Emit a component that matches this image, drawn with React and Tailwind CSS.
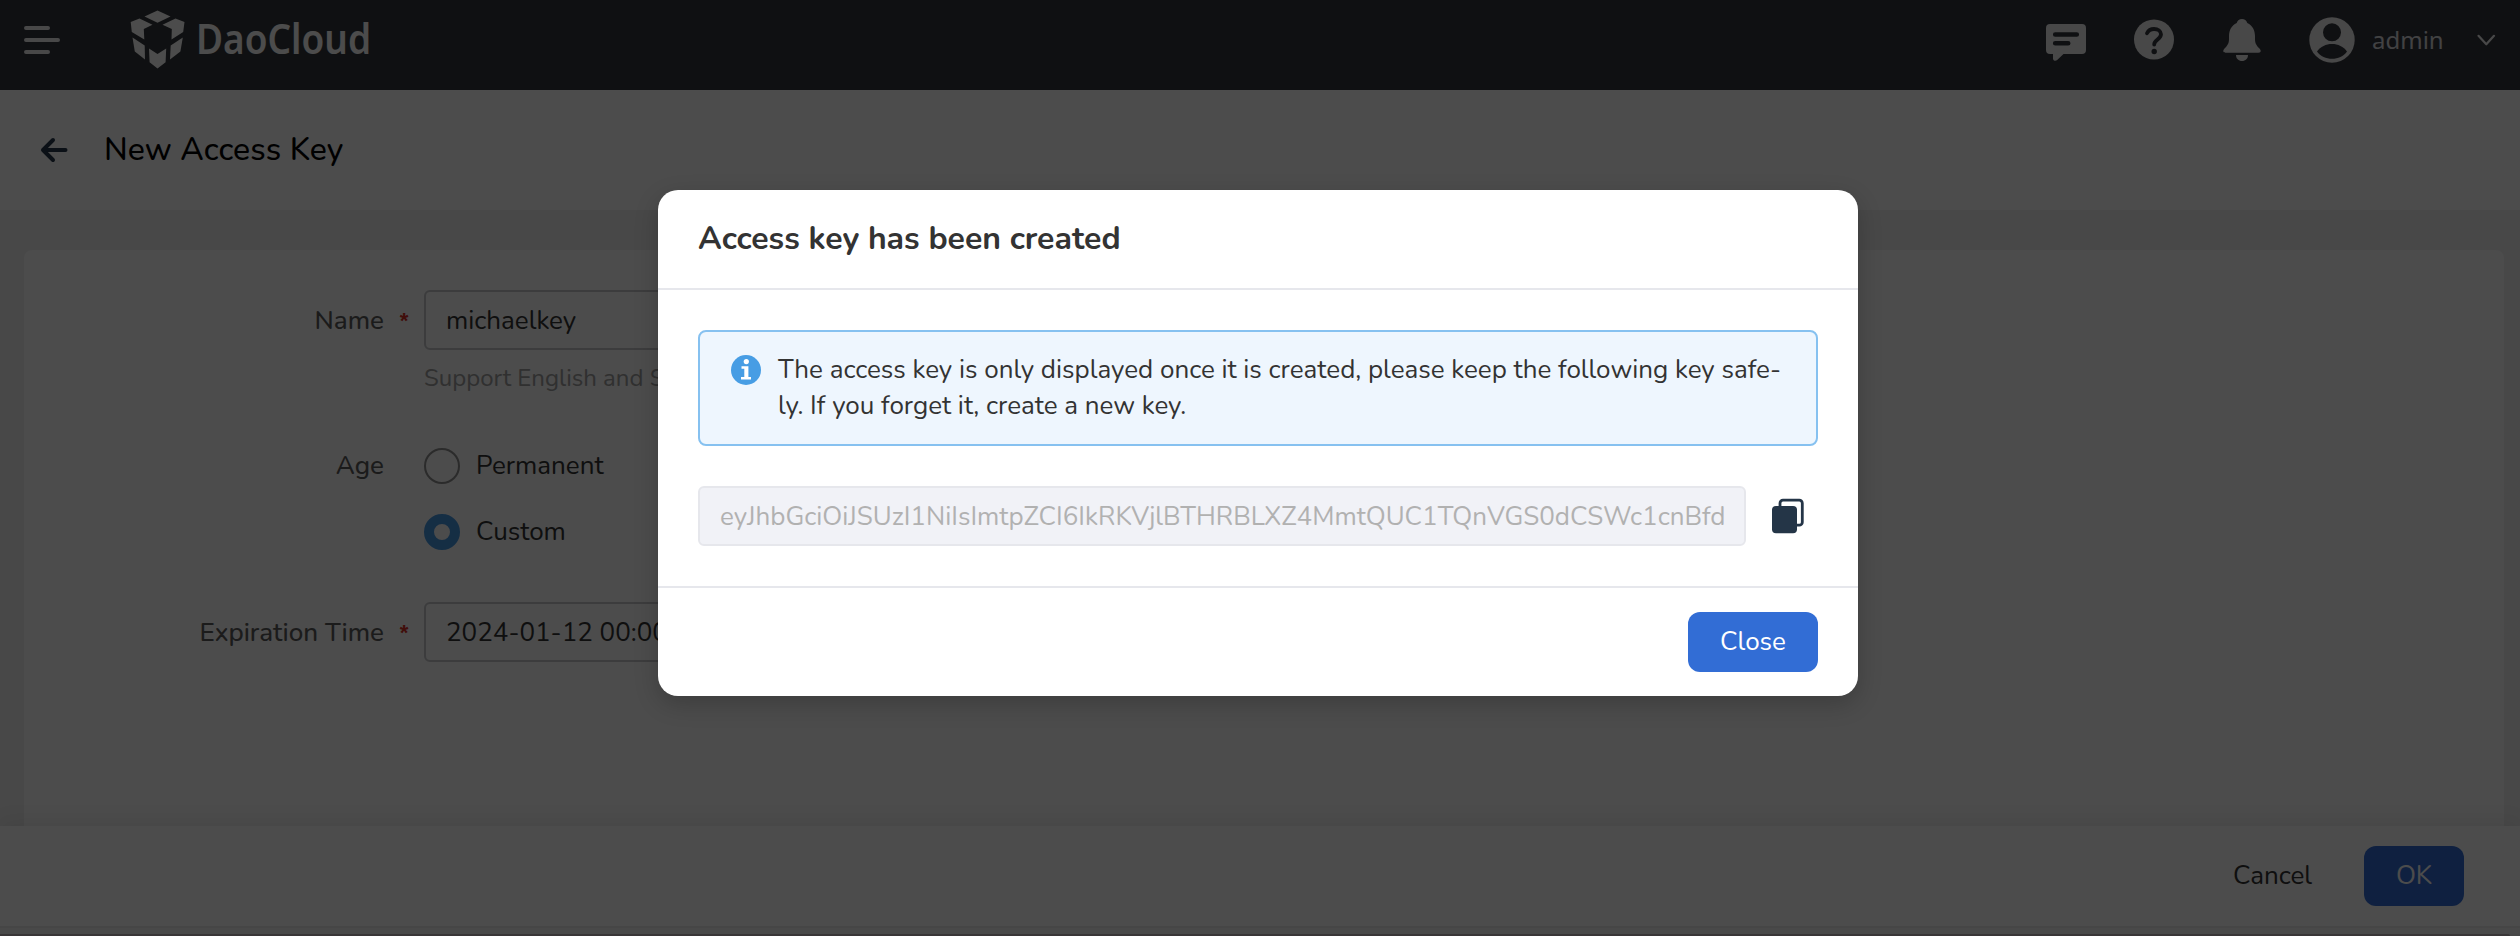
function Logo() {
  return (
    <svg className="h-[60px] w-[56px]" viewBox="130 10 56 60" fill="#fff">
      <path d="M157.5 10.5 170.5 16.5 157.5 22.8 144.5 16.5Z" />
      <path d="M139.5 18.5 152.5 24.8 143.8 29 144.3 39.5 131.8 32 130.7 22Z" />
      <path d="M175.5 18.5 162.5 24.8 171.8 29 171.5 39.5 183.2 32 184.5 22Z" />
      <path d="M132.5 37.5 144.7 45.5 145 59.5 134.8 51.5Z" />
      <path d="M182.8 37.5 170.7 45.5 170 59.5 180.4 51.5Z" />
      <path d="M149 48.5 157.5 54 166.2 48.5 165.6 62.3 157.5 68.5 149.6 62.3Z" />
    </svg>
  );
}

function TopBar() {
  return (
    <header className="flex h-[90px] items-start bg-[#34373c]">
      <svg className="mt-5 ml-6 h-10 w-9" viewBox="0 0 36 40" stroke="#f0f0f2" strokeWidth="4" strokeLinecap="round">
        <path d="M2 8H24M2 20H34M2 32H24" />
      </svg>
      <div className="mt-2.5 ml-[70px] flex">
        <Logo />
        <span className="ml-2.5 origin-left scale-x-[0.88] font-['Noto_Sans',sans-serif] text-[42px] leading-[55px] font-semibold text-white">
          DaoCloud
        </span>
      </div>
      <div className="mt-4 mr-6 ml-auto flex h-12 items-center text-[#f0f0f2]">
        <svg className="h-12 w-10" viewBox="2046 16 40 48" fill="currentColor">
          <path
            fillRule="evenodd"
            d="M2050 24H2082a4 4 0 0 1 4 4V50a4 4 0 0 1-4 4H2063.5L2057.200 60.100C2055.600 61.500 2053 60.800 2053 58.500V54H2050a4 4 0 0 1-4-4V28a4 4 0 0 1 4-4ZM2055.200 32.200a2.300 2.300 0 0 0 0 4.600H2076.800a2.300 2.300 0 0 0 0-4.600ZM2055.200 41a2.300 2.300 0 0 0 0 4.600H2068.200a2.300 2.300 0 0 0 0-4.600Z"
          />
        </svg>
        <svg className="ml-12 h-12 w-10" viewBox="2134 16 40 48">
          <circle cx="2154" cy="39.500" r="20" fill="currentColor" />
          <path
            d="M2147 33.200C2148.300 30.500 2150.800 29 2154 29C2158 29 2161 31 2161 34.300C2161 36.800 2159.300 38.200 2157.300 39.800C2155 41.600 2154.200 42.700 2154.200 44.500"
            fill="none"
            stroke="#34373c"
            strokeWidth="3.800"
            strokeLinecap="round"
          />
          <circle cx="2154.200" cy="51.500" r="2.700" fill="#34373c" />
        </svg>
        <svg className="ml-12 h-12 w-10" viewBox="2222 16 40 48" fill="currentColor">
          <path d="M2242 19C2244.600 19 2246.500 20.600 2247.300 23C2252.500 25.500 2255 30.300 2255 36V39C2255 43.500 2256.500 45.500 2259.500 48.500C2261.800 51 2260.500 52.700 2258.500 52.700H2225.500C2223.500 52.700 2222.200 51 2224.500 48.500C2227.500 45.500 2229 43.500 2229 39V36C2229 30.300 2231.500 25.500 2236.700 23C2237.500 20.600 2239.400 19 2242 19Z" />
          <path d="M2236 55H2248C2248 58.500 2245.500 61 2242 61C2238.500 61 2236 58.500 2236 55Z" />
        </svg>
        <svg className="ml-[47px] h-12 w-[46px]" viewBox="2309 16 46 48">
          <circle cx="2332" cy="40" r="22.700" fill="currentColor" />
          <circle cx="2332" cy="32.300" r="9" fill="#34373c" />
          <path d="M2317 51.500C2320.500 46.500 2326 44 2332 44C2338 44 2343.500 46.500 2347 51.500C2343.500 56.300 2338 58.800 2332 58.800C2326 58.800 2320.500 56.300 2317 51.500Z" fill="#34373c" />
        </svg>
        <span className="ml-[17px] w-[74px] font-['Noto_Sans',sans-serif] text-[24px] leading-9 font-normal text-[#dcdce0]">admin</span>
        <svg className="ml-[30px] h-5 w-5" viewBox="0 0 20 20" fill="none" stroke="currentColor" strokeWidth="2.200" strokeLinecap="round" strokeLinejoin="round">
          <path d="M2.500 5.800 10.300 14.300 18 5.800" />
        </svg>
      </div>
    </header>
  );
}

function Label({ children, required }) {
  return (
    <div className="flex w-[400px] shrink-0 font-medium text-[#5c5c5c]">
      <span className="w-[360px] text-right">{children}</span>
      {required && (
        <span className="ml-3 w-4 pt-[3px] text-center font-['Liberation_Mono',monospace] text-[22px] font-bold text-[#d93026]">*</span>
      )}
    </div>
  );
}

function Field({ label, value }) {
  return (
    <div className="flex items-start">
      <div className="pt-[13px]">
        <Label required>{label}</Label>
      </div>
      <div className="h-[60px] w-[800px] rounded-[6px] border-2 border-[#c8c9cc] px-5 pt-[11px] text-[#333]">{value}</div>
    </div>
  );
}

function Radio({ label, checked }) {
  return (
    <div className="flex h-9 items-center gap-4 text-[#333]">
      {checked ? (
        <span className="size-9 rounded-full border-10 border-[#4799e5]" />
      ) : (
        <span className="size-9 rounded-full border-2 border-[#909090]" />
      )}
      <span>{label}</span>
    </div>
  );
}

function Modal() {
  return (
    <div className="absolute inset-0 flex items-start justify-center overflow-hidden bg-black/70 pt-[190px] pr-1">
      <div className="flex h-[506px] w-[1200px] flex-col rounded-[20px] bg-white text-[#333] shadow-[0_8px_24px_rgba(0,0,0,0.2)]">
        <div className="flex h-[100px] items-center border-b-2 border-[#e6e7ec] px-10 text-[32px] leading-[48px] font-bold">
          Access key has been created
        </div>
        <div className="flex flex-col gap-10 px-10 pt-10">
          <div className="flex h-[116px] gap-[17px] rounded-[8px] border-2 border-[#86c1f0] bg-[#eef6fe] pt-5 pl-[31px]">
            <svg className="mt-[3px] size-[30px] shrink-0" viewBox="0 0 30 30">
              <circle cx="15" cy="15" r="15" fill="#479de4" />
              <circle cx="15.300" cy="6.600" r="2.600" fill="#fff" />
              <path d="M10.500 11.200H17.400V22H20V24.500H10V22H13.300V13.700H10.500Z" fill="#fff" />
            </svg>
            <p className="whitespace-nowrap">
              The access key is only displayed once it is created, please keep the following key safe-
              <br />
              ly. If you forget it, create a new key.
            </p>
          </div>
          <div className="flex items-center">
            <div className="h-[60px] w-[1048px] overflow-hidden rounded-[6px] border-2 border-[#e6e7ec] bg-[#f1f2f7] px-5 pt-[11px] whitespace-nowrap text-[#b1b1b1]">
              eyJhbGciOiJSUzI1NiIsImtpZCI6IkRKVjlBTHRBLXZ4MmtQUC1TQnVGS0dCSWc1cnBfd
            </div>
            <svg className="ml-[26px] h-9 w-8" viewBox="0 0 32 36">
              <rect x="8" y="2.200" width="22.300" height="25" rx="3" fill="none" stroke="#243547" strokeWidth="2.800" />
              <rect x="0" y="8" width="25" height="27.200" rx="4" fill="#243547" />
            </svg>
          </div>
        </div>
        <div className="mt-10 flex h-[110px] items-start justify-end border-t-2 border-[#e6e7ec] px-10 pt-6">
          <button className="h-[60px] w-[130px] rounded-[12px] bg-[#326dd5] text-white">Close</button>
        </div>
      </div>
    </div>
  );
}

export default function App() {
  return (
    <div className="relative flex h-[936px] w-[2520px] flex-col overflow-hidden bg-[#f0f0f0] font-['Nunito','Lato',sans-serif] text-[26px] leading-9">
      <TopBar />
      <div className="flex h-[120px] items-center bg-[#fdfdfd] pl-10">
        <svg className="h-7 w-7" viewBox="0 0 28 28" fill="none" stroke="#25364a" strokeWidth="4" strokeLinecap="round" strokeLinejoin="round">
          <path d="M13 4 3 14 13 24M3 14H25.500" />
        </svg>
        <h1 className="ml-9 text-[32px] leading-[48px] font-medium tracking-[0.1px] text-black">New Access Key</h1>
      </div>
      <main className="min-h-0 flex-1 px-6 pt-10 pr-4">
        <div className="h-full rounded-t-[8px] bg-[#fdfdfd] pt-10">
          <div className="flex flex-col">
            <Field label="Name" value="michaelkey" />
            <p className="mt-[10px] ml-[400px] text-[24px] text-[#a0a0a0]">Support English and Simplified</p>
            <div className="mt-[52px] flex">
              <Label>Age</Label>
              <div className="flex flex-col gap-[30px]">
                <Radio label="Permanent" />
                <Radio label="Custom" checked />
              </div>
            </div>
            <div className="mt-[52px]">
              <Field label="Expiration Time" value="2024-01-12 00:00:00" />
            </div>
          </div>
        </div>
      </main>
      <footer className="flex h-[102px] shrink-0 items-start justify-end border-b-2 border-[#ebebeb] bg-[#fdfdfd] pt-5 pr-14 text-[#333] shadow-[0_-4px_20px_rgba(0,0,0,0.08)]">
        <button className="mr-[52px] h-[60px]">Cancel</button>
        <button className="h-[60px] w-[100px] rounded-[12px] bg-[#326dd5] text-white">OK</button>
      </footer>
      <div className="h-1.5 shrink-0 bg-[#f3f3f3]" />
      <div className="mr-2.5 h-0.5 shrink-0 rounded-tr bg-[#bfb6b8]" />
      <Modal />
    </div>
  );
}
